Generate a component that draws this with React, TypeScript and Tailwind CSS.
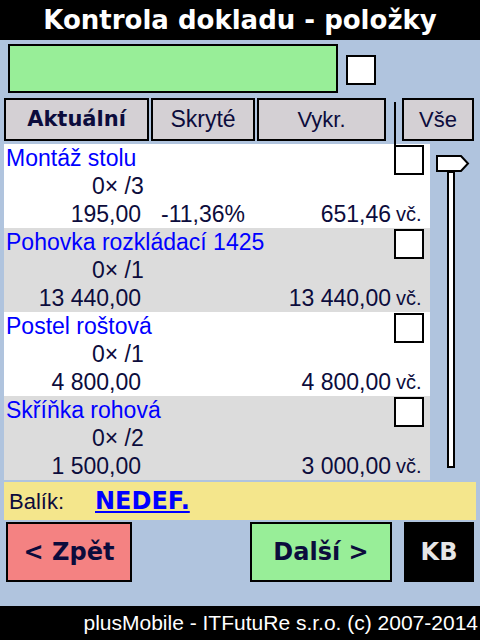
import React from 'react';

const bold = "font-['DejaVu_Sans',sans-serif] font-bold";
const reg = "font-['Liberation_Sans',Arial,sans-serif]";

type Item = { name: string; qty: string; price: string; disc?: string; total: string };

const items: Item[] = [
  { name: 'Montáž stolu', qty: '0× /3', price: '195,00', disc: '-11,36%', total: '651,46' },
  { name: 'Pohovka rozkládací 1425', qty: '0× /1', price: '13 440,00', total: '13 440,00' },
  { name: 'Postel roštová', qty: '0× /1', price: '4 800,00', total: '4 800,00' },
  { name: 'Skříňka rohová', qty: '0× /2', price: '1 500,00', total: '3 000,00' },
];

function Check() {
  return <div className="w-[30px] h-[30px] border-2 border-black bg-white shrink-0" />;
}

export default function App() {
  return (
    <div className={`w-[480px] h-[640px] bg-[#b0c4de] flex flex-col relative overflow-hidden text-[#0c0c3c] ${reg}`}>
      {/* Title */}
      <div className={`h-[40px] bg-black text-white flex items-center justify-center text-[26px] leading-none ${bold}`}>
        Kontrola dokladu - položky
      </div>

      {/* Scan field */}
      <div className="flex pt-[4px] pl-[8px]">
        <div className="w-[330px] h-[49px] border-2 border-black bg-[#98ee98]" />
        <div className="ml-[8px] mt-[11px]">
          <Check />
        </div>
      </div>

      {/* Tabs */}
      <div className="flex mt-[5px] pl-[4px] h-[43px]">
        <div className={`w-[145px] border-2 border-black bg-[#d4d0d4] flex items-center justify-center text-[21px] ${bold}`}>
          Aktuální
        </div>
        <div className="w-[104px] ml-[2px] border-2 border-black bg-[#d4d0d4] flex items-center justify-center text-[23px]">
          Skryté
        </div>
        <div className="w-[129px] ml-[2px] border-2 border-black bg-[#d4d0d4] flex items-center justify-center text-[22px]">
          Vykr.
        </div>
        <div className="w-[72px] ml-[16px] border-2 border-black bg-[#d4d0d4] flex items-center justify-center text-[22px]">
          Vše
        </div>
      </div>
      <div className="absolute left-[394px] top-[102px] w-[2px] h-[43px] bg-black" />

      {/* List + scrollbar */}
      <div className="flex mt-[3px]">
        <div className="w-[426px] ml-[4px] flex flex-col">
          {items.map((it, i) => (
            <div key={it.name} className={`h-[84px] flex flex-col ${i % 2 ? 'bg-[#dcdcdc]' : 'bg-white'}`}>
              <div className="h-[28px] flex items-start">
                <div className="flex-1 pl-[2px] text-[23px] leading-[28px] text-[#0000ff] whitespace-nowrap">{it.name}</div>
                <div className="mt-[1px] mr-[6px]">
                  <Check />
                </div>
              </div>
              <div className="h-[28px] pl-[88px] text-[23px] leading-[28px]">{it.qty}</div>
              <div className="h-[28px] flex text-[23px] leading-[28px] whitespace-nowrap">
                <div className="w-[137px] text-right">{it.price}</div>
                <div className="ml-[20px]">{it.disc}</div>
                <div className="flex-1 text-right">{it.total}</div>
                <div className="w-[39px] pl-[5px] text-[20px]">vč.</div>
              </div>
            </div>
          ))}
        </div>
        <div className="flex-1 flex flex-col">
          <svg className="ml-[6px] mt-[11px]" width="34" height="17" viewBox="0 0 34 17">
            <path d="M1 1 H25 L32 8.5 L25 16 H1 Z" fill="white" stroke="black" strokeWidth="2" />
          </svg>
          <div className="ml-[17px] -mt-[1px] w-[8px] h-[297px] border-2 border-black bg-white" />
        </div>
      </div>

      {/* Package */}
      <div className="ml-[4px] mt-[2px] w-[472px] h-[38px] bg-[#f4e68c] flex items-center">
        <div className="w-[91px] pl-[5px] text-[22px]">Balík:</div>
        <div className={`text-[24px] text-[#0000ff] underline ${bold}`}>NEDEF.</div>
      </div>

      {/* Buttons */}
      <div className={`flex mt-[2px] h-[60px] text-[24px] ${bold}`}>
        <div className="ml-[6px] w-[126px] border-2 border-black bg-[#f48282] flex items-center justify-center">
          &lt; Zpět
        </div>
        <div className="ml-[118px] w-[142px] border-2 border-black bg-[#98ee98] flex items-center justify-center">
          Další &gt;
        </div>
        <div className="ml-[12px] w-[70px] bg-black text-[#e6e6e6] flex items-center justify-center">KB</div>
      </div>

      <div className="flex-1" />

      {/* Footer */}
      <div className="h-[34px] bg-black text-white flex items-center justify-end pr-[2px] text-[21px] whitespace-nowrap">
        plusMobile - ITFutuRe s.r.o. (c) 2007-2014
      </div>
    </div>
  );
}
